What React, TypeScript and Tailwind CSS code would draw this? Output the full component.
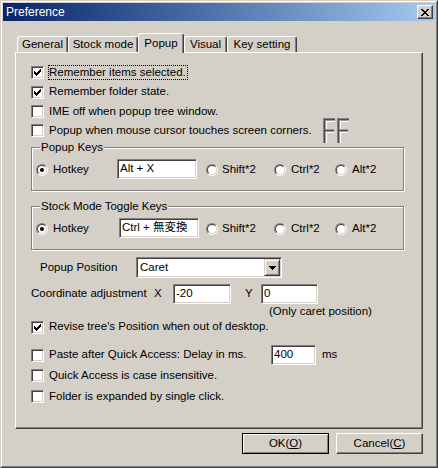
import React from "react";

const FONT = "font-['Liberation_Sans','Noto_Sans_CJK_JP',sans-serif]";

function Check({ checked }: { checked?: boolean }) {
  return (
    <span className="flex h-[13px] w-[13px] shrink-0 items-center justify-center border border-b-white border-l-[#808080] border-r-white border-t-[#808080] bg-white shadow-[inset_1px_1px_0_#404040,inset_-1px_-1px_0_#d4d0c8]">
      {checked && (
        <svg width="7" height="7" viewBox="0 0 7 7" shapeRendering="crispEdges">
          <path
            d="M6 0h1v1h-1z M5 1h2v1h-2z M0 2h1v1h-1z M4 2h3v1h-3z M0 3h2v1h-2z M3 3h3v1h-3z M0 4h5v1h-5z M1 5h3v1h-3z M2 6h1v1h-1z"
            fill="#000"
          />
        </svg>
      )}
    </span>
  );
}

function Radio({ checked }: { checked?: boolean }) {
  return (
    <span className="flex h-[12px] w-[12px] shrink-0 items-center justify-center rounded-full border border-b-white border-l-[#808080] border-r-white border-t-[#808080]">
      <span className="flex h-[10px] w-[10px] items-center justify-center rounded-full border border-b-[#d4d0c8] border-l-[#404040] border-r-[#d4d0c8] border-t-[#404040] bg-white">
        {checked && <span className="h-[4px] w-[4px] rounded-full bg-black" />}
      </span>
    </span>
  );
}

function Edit({ value, w, h = 20 }: { value: string; w: number; h?: number }) {
  return (
    <div
      className="flex shrink-0 items-start border border-b-white border-l-[#808080] border-r-white border-t-[#808080] bg-white pl-[2px] pt-[2px] leading-[13px] shadow-[inset_1px_1px_0_#404040,inset_-1px_-1px_0_#d4d0c8]"
      style={{ width: w, height: h }}
    >
      {value}
    </div>
  );
}

function CheckRow({
  checked,
  label,
  h,
  focus,
}: {
  checked?: boolean;
  label: string;
  h: string;
  focus?: boolean;
}) {
  return (
    <div className={`flex items-center ${h}`}>
      <Check checked={checked} />
      {focus ? (
        <span className="ml-[4px] border border-dotted border-black pr-[1px] leading-[13px]">{label}</span>
      ) : (
        <span className="ml-[5px] whitespace-nowrap">{label}</span>
      )}
    </div>
  );
}

function RadioItem({ label, w, gap, checked }: { label: string; w: number; gap: string; checked?: boolean }) {
  return (
    <div className="flex shrink-0 items-center pt-[2px]" style={{ width: w }}>
      <Radio checked={checked} />
      <span className={gap}>{label}</span>
    </div>
  );
}

function Group({ label, children }: { label: string; children: React.ReactNode }) {
  return (
    <div className="relative h-[44px] w-[373px] border border-[#808080] pl-[4px] pt-[11px] shadow-[inset_1px_1px_0_#fff,1px_1px_0_#fff]">
      <span className="absolute left-[8px] top-[-8px] bg-[#d4d0c8] px-[1px] leading-[14px]">{label}</span>
      {children}
    </div>
  );
}

function KeyRow({ value, textW, inputMl }: { value: string; textW: number; inputMl: string }) {
  return (
    <div className="flex h-[20px] items-center">
      <div className="flex shrink-0 items-center pt-[2px]" style={{ width: 12 + 5 + textW }}>
        <Radio checked />
        <span className="ml-[5px]">Hotkey</span>
      </div>
      <Edit value={value} w={80} />
      <div className={`flex items-center ${inputMl}`}>
        <RadioItem label="Shift*2" w={68} gap="ml-[4px]" />
        <RadioItem label="Ctrl*2" w={61} gap="ml-[5px]" />
        <RadioItem label="Alt*2" w={50} gap="ml-[5px]" />
      </div>
    </div>
  );
}

function FF() {
  const one = (x: number) => (
    <g transform={`translate(${x},0)`}>
      <rect x="0" y="0" width="12" height="3" fill="#9a9a9a" />
      <rect x="0" y="0" width="3" height="25" fill="#9a9a9a" />
      <rect x="0" y="11" width="11" height="3" fill="#9a9a9a" />
      <rect x="0" y="0" width="12" height="1" fill="#808080" />
      <rect x="0" y="0" width="1" height="25" fill="#808080" />
      <rect x="1" y="1" width="1" height="24" fill="#505050" />
      <rect x="1" y="1" width="11" height="1" fill="#505050" />
      <rect x="1" y="12" width="10" height="1" fill="#505050" />
      <rect x="3" y="3" width="9" height="1" fill="#fff" />
      <rect x="3" y="14" width="8" height="1" fill="#fff" />
      <rect x="3" y="14" width="1" height="11" fill="#fff" />
      <rect x="3" y="3" width="1" height="8" fill="#fff" />
    </g>
  );
  return (
    <svg width="29" height="25" viewBox="0 0 29 25" shapeRendering="crispEdges" className="shrink-0">
      {one(0)}
      {one(14)}
    </svg>
  );
}

function Tab({ label, w, selected }: { label: string; w: number; selected?: boolean }) {
  return (
    <div
      className={`flex shrink-0 justify-center rounded-t-[3px] border-l border-r border-t border-l-white border-r-[#404040] border-t-white bg-[#d4d0c8] shadow-[inset_-1px_0_0_#808080] ${
        selected ? "relative z-10 mb-[-1px] h-[20px] pt-[3px]" : "h-[16px] pt-[1px]"
      }`}
      style={{ width: w }}
    >
      <span className="leading-[13px]">{label}</span>
    </div>
  );
}

function Btn({ children, def, w }: { children: React.ReactNode; def?: boolean; w: number }) {
  return (
    <div
      className={`flex h-[21px] items-center justify-center ${
        def
          ? "border border-black shadow-[inset_1px_1px_0_#fff,inset_-1px_-1px_0_#808080]"
          : "border border-b-[#404040] border-l-white border-r-[#404040] border-t-white shadow-[inset_-1px_-1px_0_#808080]"
      }`}
      style={{ width: w }}
    >
      {children}
    </div>
  );
}

export default function App() {
  return (
    <div className={`${FONT} h-[468px] w-[438px] text-[11.5px] text-black`}>
      <div className="h-full w-full border border-b-[#404040] border-l-[#d4d0c8] border-r-[#404040] border-t-[#d4d0c8] bg-[#d4d0c8]">
        <div className="h-full w-full border border-b-[#808080] border-l-white border-r-[#808080] border-t-white p-[1px]">
          {/* Title bar */}
          <div className="flex h-[18px] items-center justify-between bg-gradient-to-r from-[#0a246a] to-[#a6caf0] pl-[3px] pr-[2px]">
            <span className="text-[12px] leading-[14px] text-white">Preference</span>
            <div className="flex h-[14px] w-[16px] items-center justify-center border border-b-[#404040] border-l-white border-r-[#404040] border-t-white bg-[#d4d0c8] shadow-[inset_-1px_-1px_0_#808080]">
              <svg width="8" height="7" viewBox="0 0 8 7" shapeRendering="crispEdges">
                <path
                  d="M0 0h2v1h-2z M6 0h2v1h-2z M1 1h2v1h-2z M5 1h2v1h-2z M2 2h4v1h-4z M3 3h2v1h-2z M2 4h4v1h-4z M1 5h2v1h-2z M5 5h2v1h-2z M0 6h2v1h-2z M6 6h2v1h-2z"
                  fill="#000"
                />
              </svg>
            </div>
          </div>

          {/* Tabs */}
          <div className="ml-[12px] mt-[12px] w-[408px]">
            <div className="flex h-[19px] items-end pl-[2px]">
              <Tab label="General" w={51} />
              <Tab label="Stock mode" w={70} />
              <Tab label="Popup" w={46} selected />
              <Tab label="Visual" w={43} />
              <Tab label="Key setting" w={70} />
            </div>

            {/* Panel */}
            <div className="h-[377px] w-[408px] border border-b-[#404040] border-l-white border-r-[#404040] border-t-white shadow-[inset_-1px_-1px_0_#808080]">
              <div className="flex flex-col pl-[15px] pt-[9px]">
                <CheckRow checked label="Remember items selected." h="h-[20px]" focus />
                <CheckRow checked label="Remember folder state." h="h-[20px]" />
                <CheckRow label="IME off when popup tree window." h="h-[19px]" />
                <div className="flex h-[19px] items-center">
                  <Check />
                  <span className="ml-[5px] w-[274px] shrink-0 whitespace-nowrap">
                    Popup when mouse cursor touches screen corners.
                  </span>
                  <FF />
                </div>

                <div className="mt-[7px]">
                  <Group label="Popup Keys">
                    <KeyRow value="Alt + X" textW={64} inputMl="ml-[9px]" />
                  </Group>
                </div>

                <div className="mt-[15px]">
                  <Group label="Stock Mode Toggle Keys">
                    <KeyRow value="Ctrl + 無変換" textW={66} inputMl="ml-[7px]" />
                  </Group>
                </div>

                {/* Popup position */}
                <div className="mt-[7px] flex h-[21px] items-center pl-[9px]">
                  <span className="w-[96px] shrink-0">Popup Position</span>
                  <div className="flex h-[21px] w-[146px] items-center justify-between border border-b-white border-l-[#808080] border-r-white border-t-[#808080] bg-white pl-[3px] shadow-[inset_1px_1px_0_#404040,inset_-1px_-1px_0_#d4d0c8]">
                    <span className="leading-[13px]">Caret</span>
                    <div className="mr-[1px] flex h-[17px] w-[16px] items-center justify-center border border-b-[#404040] border-l-[#d4d0c8] border-r-[#404040] border-t-[#d4d0c8] bg-[#d4d0c8] shadow-[inset_1px_1px_0_#fff,inset_-1px_-1px_0_#808080]">
                      <svg width="7" height="4" viewBox="0 0 7 4" shapeRendering="crispEdges">
                        <path d="M0 0h7v1h-7z M1 1h5v1h-5z M2 2h3v1h-3z M3 3h1v1h-1z" fill="#000" />
                      </svg>
                    </div>
                  </div>
                </div>

                {/* Coordinate */}
                <div className="mt-[6px] flex h-[20px] items-center">
                  <span className="w-[123px] shrink-0 whitespace-nowrap">Coordinate adjustment</span>
                  <span className="w-[19px] shrink-0">X</span>
                  <Edit value="-20" w={58} />
                  <span className="w-[30px] shrink-0 pl-[14px]">Y</span>
                  <Edit value="0" w={57} />
                </div>
                <div className="flex h-[15px] items-center pl-[238px]">
                  <span className="whitespace-nowrap">(Only caret position)</span>
                </div>

                <CheckRow checked label="Revise tree's Position when out of desktop." h="h-[16px]" />

                <div className="mt-[10px] flex h-[20px] items-center">
                  <Check />
                  <span className="ml-[5px] w-[222px] shrink-0 whitespace-nowrap">
                    Paste after Quick Access: Delay in ms.
                  </span>
                  <Edit value="400" w={45} />
                  <span className="ml-[6px]">ms</span>
                </div>
                <CheckRow label="Quick Access is case insensitive." h="h-[21px]" />
                <CheckRow label="Folder is expanded by single click." h="h-[21px]" />
              </div>
            </div>

            {/* Buttons */}
            <div className="mt-[4px] flex justify-end gap-[7px]">
              <Btn def w={87}>
                <span>
                  OK(<span className="underline">O</span>)
                </span>
              </Btn>
              <Btn w={87}>
                <span>
                  Cancel(<span className="underline">C</span>)
                </span>
              </Btn>
            </div>
          </div>
        </div>
      </div>
    </div>
  );
}
